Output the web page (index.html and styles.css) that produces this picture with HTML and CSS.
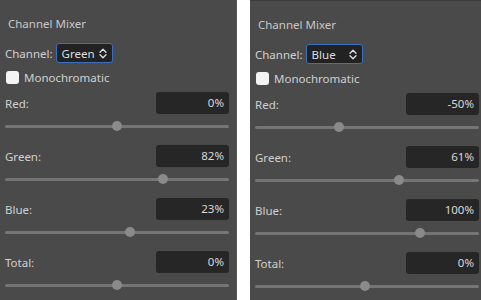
FILE: index.html
```html
<!DOCTYPE html>
<html>
	<head>
		<link rel="stylesheet" href="styles.css">
	</head>
	<body>
		<div class="panel">
			<div class="title">Channel Mixer</div>
			<div class="channel-row">
				<span>Channel:</span>
				<div class="select">
					<span>Green</span>
					<svg width="8" height="11" viewBox="0 0 8 11"><path d="M1 4.2 L4 1.2 L7 4.2 M1 6.8 L4 9.8 L7 6.8" fill="none" stroke="#e2e2e2" stroke-width="1.3" stroke-linecap="round" stroke-linejoin="round"/></svg>
				</div>
			</div>
			<label class="check-row"><span class="checkbox"></span>Monochromatic</label>
			<div class="mix-row">
				<div class="mix-head"><span>Red:</span><div class="value">0%</div></div>
				<div class="slider"><div class="thumb" style="left: 50%"></div></div>
			</div>
			<div class="mix-row">
				<div class="mix-head"><span>Green:</span><div class="value">82%</div></div>
				<div class="slider"><div class="thumb" style="left: 70.5%"></div></div>
			</div>
			<div class="mix-row">
				<div class="mix-head"><span>Blue:</span><div class="value">23%</div></div>
				<div class="slider"><div class="thumb" style="left: 55.75%"></div></div>
			</div>
			<div class="mix-row">
				<div class="mix-head"><span>Total:</span><div class="value">0%</div></div>
				<div class="slider"><div class="thumb" style="left: 50%"></div></div>
			</div>
		</div>
		<div class="panel second">
			<div class="title">Channel Mixer</div>
			<div class="channel-row">
				<span>Channel:</span>
				<div class="select">
					<span>Blue</span>
					<svg width="8" height="11" viewBox="0 0 8 11"><path d="M1 4.2 L4 1.2 L7 4.2 M1 6.8 L4 9.8 L7 6.8" fill="none" stroke="#e2e2e2" stroke-width="1.3" stroke-linecap="round" stroke-linejoin="round"/></svg>
				</div>
			</div>
			<label class="check-row"><span class="checkbox"></span>Monochromatic</label>
			<div class="mix-row">
				<div class="mix-head"><span>Red:</span><div class="value">-50%</div></div>
				<div class="slider"><div class="thumb" style="left: 37.5%"></div></div>
			</div>
			<div class="mix-row">
				<div class="mix-head"><span>Green:</span><div class="value">61%</div></div>
				<div class="slider"><div class="thumb" style="left: 64.5%"></div></div>
			</div>
			<div class="mix-row">
				<div class="mix-head"><span>Blue:</span><div class="value">100%</div></div>
				<div class="slider"><div class="thumb" style="left: 73.5%"></div></div>
			</div>
			<div class="mix-row">
				<div class="mix-head"><span>Total:</span><div class="value">0%</div></div>
				<div class="slider"><div class="thumb" style="left: 49%"></div></div>
			</div>
		</div>
	</body>
</html>
```
FILE: styles.css
```css
:root {
	--panel-bg: #4a4a4a;
	--field-bg: #262626;
	--text-color: #d0d0d0;
}
html, body {
	margin: 0;
	height: 100%;
}
body {
	display: flex;
	gap: 13px;
	background: #ffffff;
	overflow: hidden;
	font-family: "Noto Sans", "Open Sans", sans-serif;
	font-size: 11.5px;
	color: var(--text-color);
}

.panel {
	box-sizing: border-box;
	flex: none;
	width: 237px;
	height: 300px;
	padding: 0 7px 0 5px;
	background: var(--panel-bg);
	border-right: 1px solid #575757;
	display: flex;
	flex-direction: column;
}
.panel.second {
	border-top: 1px solid #3c3c3c;
}

.title {
	margin-top: 16px;
	padding-left: 3px;
	line-height: 16px;
	color: #c8c8c8;
}

.channel-row {
	margin-top: 11px;
	display: flex;
	align-items: center;
	gap: 3px;
	height: 20px;
}
.select {
	box-sizing: border-box;
	width: 57px;
	height: 20px;
	padding: 0 5px 0 5px;
	display: flex;
	align-items: center;
	justify-content: space-between;
	background: #222222;
	border: 1px solid #3b6fc0;
	border-radius: 3px;
	color: #dedede;
}
.select svg {
	display: block;
}

.check-row {
	margin-top: 7px;
	display: flex;
	align-items: center;
	gap: 5px;
	height: 16px;
	padding-left: 1px;
}
.checkbox {
	width: 13px;
	height: 13px;
	border-radius: 3px;
	background: #f4f4f4;
}

.check-row + .mix-row {
	margin-top: 7px;
}
.mix-row {
	margin-bottom: 13px;
}
.mix-head {
	display: flex;
	align-items: center;
	justify-content: space-between;
	height: 22px;
}
.value {
	box-sizing: border-box;
	width: 73px;
	height: 22px;
	padding-right: 5px;
	line-height: 22px;
	text-align: right;
	background: var(--field-bg);
	border-radius: 3px;
	color: #d8d8d8;
}

.slider {
	position: relative;
	margin-top: 6px;
	height: 12px;
}
.slider::before {
	content: "";
	position: absolute;
	left: 0;
	right: 0;
	top: 5px;
	height: 3px;
	border-radius: 2px;
	background: #757575;
}
.thumb {
	position: absolute;
	top: 1px;
	width: 10px;
	height: 10px;
	margin-left: -5px;
	border-radius: 50%;
	background: #8a8a8a;
}
```
